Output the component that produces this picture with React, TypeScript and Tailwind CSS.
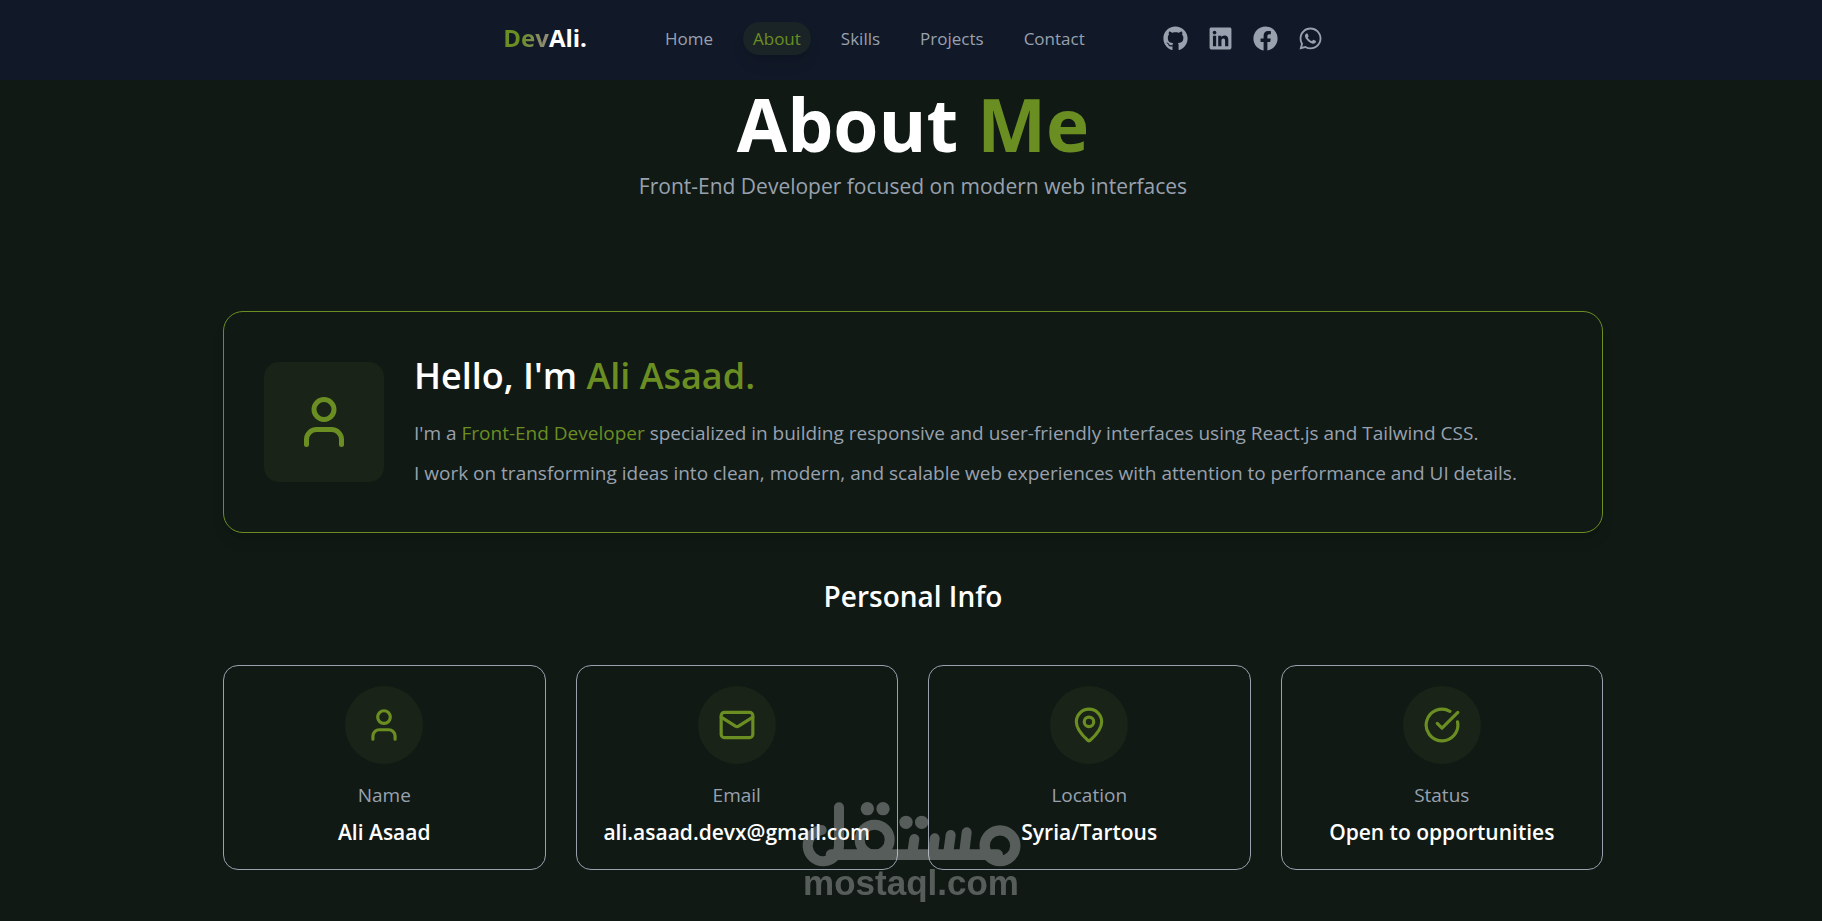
import { CircleCheckBig, Mail, MapPin, User } from 'lucide-react';
import { FaFacebook, FaGithub, FaLinkedin, FaWhatsapp } from 'react-icons/fa';

const navLinks = ['Home', 'About', 'Skills', 'Projects', 'Contact'];

const socials = [
  { label: 'GitHub', icon: FaGithub },
  { label: 'LinkedIn', icon: FaLinkedin },
  { label: 'Facebook', icon: FaFacebook },
  { label: 'WhatsApp', icon: FaWhatsapp },
];

const info = [
  { label: 'Name', value: 'Ali Asaad', icon: User },
  { label: 'Email', value: 'ali.asaad.devx@gmail.com', icon: Mail },
  { label: 'Location', value: 'Syria/Tartous', icon: MapPin },
  { label: 'Status', value: 'Open to opportunities', icon: CircleCheckBig },
];

function Navbar() {
  return (
    <header className="sticky top-0 z-10 flex h-20 items-center justify-center gap-[68px] bg-[#111827] pb-1 pl-1">
      <a href="#home" className="text-2xl font-bold text-white">
        <span className="bg-gradient-to-r from-[#6b8e23] from-40% to-[#94897a] bg-clip-text text-transparent">Dev</span>
        Ali.
      </a>
      <nav className="flex gap-5">
        {navLinks.map((link) => (
          <a
            key={link}
            href={`#${link.toLowerCase()}`}
            className={
              link === 'About'
                ? 'rounded-full bg-[#1a2426] px-[10px] py-1 text-[17px] leading-[25px] text-[#6b8e23] shadow-lg'
                : 'px-[10px] py-1 text-[17px] leading-[25px] text-gray-400'
            }
          >
            {link}
          </a>
        ))}
      </nav>
      <div className="flex gap-5 text-gray-400">
        {socials.map(({ label, icon: Icon }) => (
          <a key={label} href={`#${label.toLowerCase()}`} aria-label={label}>
            <Icon size={25} />
          </a>
        ))}
      </div>
    </header>
  );
}

function Watermark() {
  return (
    <div className="pointer-events-none absolute bottom-6 left-1/2 w-[220px] -translate-x-1/2 text-[#dcdcdc] opacity-35">
      <svg viewBox="60 63 660 204" className="block w-full" fill="none" stroke="currentColor" strokeLinecap="round">
        <path d="M122 150A47 47 0 1 0 174 197V82" strokeWidth="30" />
        <circle cx="281" cy="179" r="45" strokeWidth="30" />
        <path d="M150 224H650" strokeWidth="32" />
        <path d="M400 177L393 224M461 175L455 224M509 165L501 224M557 157L549 224" strokeWidth="30" />
        <circle cx="657" cy="197" r="46" strokeWidth="31" />
        <g fill="currentColor" stroke="none">
          <circle cx="259" cy="86" r="20" />
          <circle cx="306" cy="86" r="20" />
          <circle cx="375" cy="127" r="20" />
          <circle cx="422" cy="127" r="20" />
        </g>
      </svg>
      <p className="text-center font-['Liberation_Sans',sans-serif] text-[35px] leading-7 font-bold">mostaql.com</p>
    </div>
  );
}

export default function App() {
  return (
    <div className="relative min-h-screen bg-[#101914] font-['Open_Sans','Noto_Sans',sans-serif]">
      <Navbar />
      <main className="mx-auto max-w-[1384px] pb-[50px] pl-1">
        <div className="pt-[6px] text-center">
          <h1 className="text-[73px] leading-[75px] font-bold text-white">
            About <span className="text-[#6b8e23]">Me</span>
          </h1>
          <p className="mt-[10px] text-[21px] leading-[30px] text-gray-400">
            Front-End Developer focused on modern web interfaces
          </p>
        </div>

        <section className="mt-[110px] flex items-center gap-[30px] rounded-[20px] border border-[#6b8e23] px-10 py-[39px] shadow-lg">
          <div className="flex size-[120px] shrink-0 items-center justify-center rounded-[15px] bg-[#192317]">
            <User size={60} className="text-[#6b8e23]" />
          </div>
          <div>
            <h2 className="text-4xl leading-[50px] font-semibold text-white">
              Hello, I'm <span className="text-[#6b8e23]">Ali Asaad.</span>
            </h2>
            <p className="mt-3 text-[19px] leading-10 text-gray-400">
              I'm a <span className="text-[#6b8e23]">Front-End Developer</span> specialized in building responsive and
              user-friendly interfaces using React.js and Tailwind CSS.
              <br />I work on transforming ideas into clean, modern, and scalable web experiences with attention to
              performance and UI details.
            </p>
          </div>
        </section>

        <h2 className="mt-[43px] text-center text-[28px] leading-10 font-semibold text-white">Personal Info</h2>

        <div className="mt-[49px] grid grid-cols-4 gap-[30px]">
          {info.map(({ label, value, icon: Icon }) => (
            <div key={label} className="flex flex-col items-center rounded-[15px] border border-gray-400 pt-5 pb-[22px]">
              <div className="flex size-[78px] items-center justify-center rounded-full bg-[#192317]">
                <Icon size={38} className="text-[#6b8e23]" />
              </div>
              <p className="mt-4 text-[19px] leading-[30px] text-gray-400">{label}</p>
              <p className="mt-[7px] text-[21px] leading-[30px] font-semibold text-white">{value}</p>
            </div>
          ))}
        </div>
      </main>
      <Watermark />
    </div>
  );
}
